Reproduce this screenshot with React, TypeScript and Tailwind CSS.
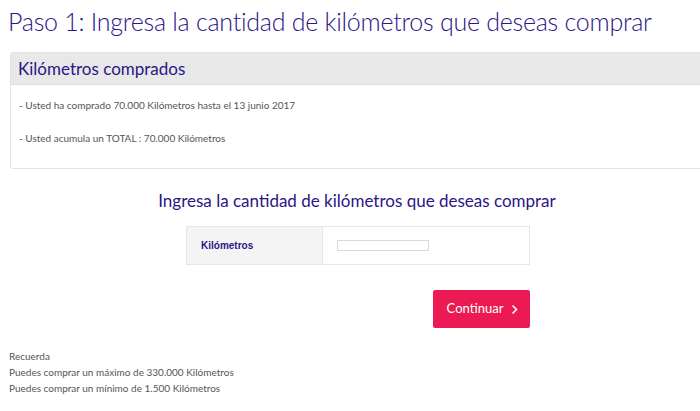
import { useState } from 'react';

export default function App() {
  const [km, setKm] = useState('');

  return (
    <div className="min-h-[411px] w-[700px] overflow-hidden bg-white font-['Lato',sans-serif] text-[#333]">
      <h1 className="pl-[8px] pt-[3px] text-[25px] leading-[36px] font-light tracking-[-0.25px] text-[#2b1587] whitespace-nowrap">
        Paso 1: Ingresa la cantidad de kilómetros que deseas comprar
      </h1>

      <div className="ml-[10px] mt-[13px] w-[700px] border border-[#e3e3e3] rounded-tl-[3px] rounded-bl-[3px]">
        <div className="h-[32px] border-b border-[#dedede] bg-[#e8e8e8] pl-[7px] text-[17px] leading-[31px] text-[#2b1587]">
          Kilómetros comprados
        </div>
        <div className="h-[83px] pl-[8px] pt-[12px] text-[10px] text-[#555]">
          <p className="leading-[16px]">- Usted ha comprado 70.000 Kilómetros hasta el 13 junio 2017</p>
          <p className="mt-[17px] leading-[16px]">- Usted acumula un TOTAL : 70.000 Kilómetros</p>
        </div>
      </div>

      <h2 className="mt-[19px] text-center pl-[14px] text-[17px] leading-[26px] text-[#2b1587]">
        Ingresa la cantidad de kilómetros que deseas comprar
      </h2>

      <div className="ml-[186px] mt-[12px] flex h-[39px] w-[344px] border border-[#e6e6e6]">
        <div className="flex w-[136px] items-center border-r border-[#e6e6e6] bg-[#f4f4f4] pl-[14px] font-['Liberation_Sans',sans-serif] text-[10px] font-bold text-[#2b1587]">
          Kilómetros
        </div>
        <div className="flex flex-1 items-center pl-[14px]">
          <input
            value={km}
            onChange={(e) => setKm(e.target.value)}
            className="h-[11px] w-[92px] border border-[#d9d9d9] bg-white outline-none"
          />
        </div>
      </div>

      <div className="ml-[433px] mt-[25px] flex">
        <button className="flex h-[38px] w-[97px] items-center justify-center gap-[8px] rounded-[2px] bg-[#ec1a54] pl-[2px] text-[13px] text-white">
          Continuar
          <svg width="7" height="11" viewBox="0 0 7 11" fill="none">
            <path d="M1.5 1.5L5.5 5.5L1.5 9.5" stroke="white" strokeWidth="1.6" />
          </svg>
        </button>
      </div>

      <div className="mt-[20px] pl-[9px] text-[10px] leading-[16px] text-[#555]">
        <p>Recuerda</p>
        <p>Puedes comprar un máximo de 330.000 Kilómetros</p>
        <p>Puedes comprar un mínimo de 1.500 Kilómetros</p>
      </div>
    </div>
  );
}
